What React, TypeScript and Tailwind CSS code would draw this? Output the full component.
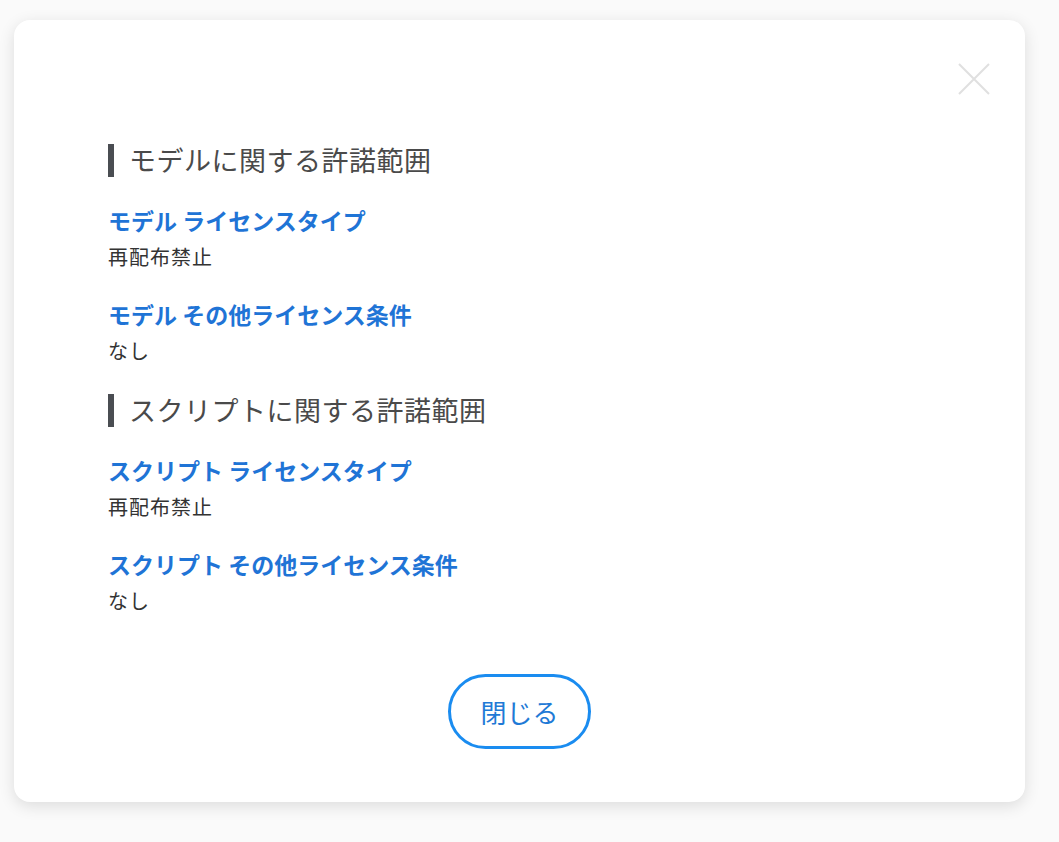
import React from "react";

const font = {
  fontFamily: '"Noto Sans CJK JP", "Noto Sans", sans-serif',
};

interface ItemProps {
  label: string;
  value: string;
}

const Item: React.FC<ItemProps> = ({ label, value }) => (
  <div className="mb-[20px]">
    <div className="text-[23px] font-bold leading-[36px] text-[#1f74d6]">{label}</div>
    <div className="text-[20px] leading-[38px] tracking-[1px] text-[#333333]">{value}</div>
  </div>
);

const Heading: React.FC<{ title: string }> = ({ title }) => (
  <div className="mb-[22px] flex h-[40px] items-center">
    <div className="h-[33px] w-[6px] bg-[#4a4d52]" />
    <h2 className="ml-[15px] text-[27px] leading-[40px] tracking-[0.5px] text-[#4a4a4a]">{title}</h2>
  </div>
);

export default function App() {
  return (
    <div className="min-h-[842px] w-full bg-[#fafafa] pl-[14px] pt-[20px]" style={font}>
      <div className="relative flex h-[782px] w-[1011px] flex-col rounded-2xl bg-white pl-[94px] pt-[120px] shadow-[0_4px_16px_rgba(0,0,0,0.12)]">
        <button className="absolute right-[35px] top-[43px] text-[#e0e0e0]" aria-label="close">
          <svg width="32" height="32" viewBox="0 0 32 32" fill="none" stroke="currentColor" strokeWidth="2">
            <path d="M1 1L31 31M31 1L1 31" />
          </svg>
        </button>
        <Heading title="モデルに関する許諾範囲" />
        <Item label="モデル ライセンスタイプ" value="再配布禁止" />
        <Item label="モデル その他ライセンス条件" value="なし" />
        <Heading title="スクリプトに関する許諾範囲" />
        <Item label="スクリプト ライセンスタイプ" value="再配布禁止" />
        <Item label="スクリプト その他ライセンス条件" value="なし" />
        <div className="mt-[34px] flex justify-center pr-[94px]">
          <button className="h-[75px] w-[143px] rounded-full border-[3px] border-[#1a8cf0] text-[26px] text-[#1f7ad6]">
            閉じる
          </button>
        </div>
      </div>
    </div>
  );
}
